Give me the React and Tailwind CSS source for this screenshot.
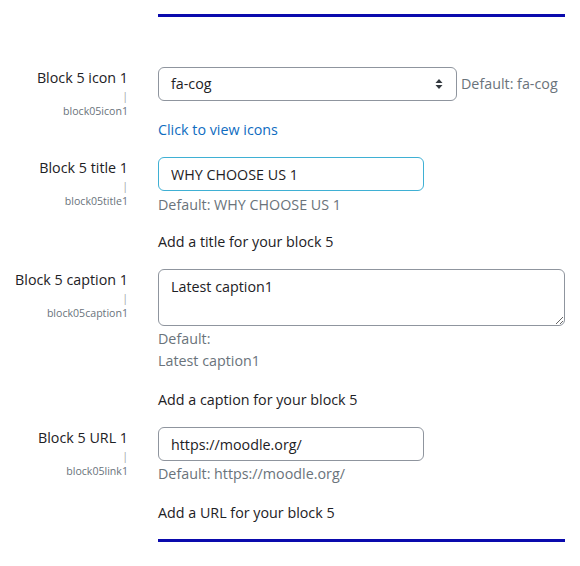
import React from "react";

function Label({ title, name }) {
  return (
    <div className="w-[128px] shrink-0 text-right">
      <div className="text-[14.3px] leading-[22px] text-[#1d2125]">{title}</div>
      <div className="text-[10.6px] leading-[15px] text-[#a0a4a8]">|</div>
      <div className="text-[10.6px] leading-[15px] text-[#6a737b]">{name}</div>
    </div>
  );
}

function Caret() {
  return (
    <svg width="8" height="12" viewBox="0 0 8 12" className="shrink-0">
      <path d="M4 1 L7.5 5 H0.5 Z" fill="#343a40" />
      <path d="M4 11 L7.5 7 H0.5 Z" fill="#343a40" />
    </svg>
  );
}

export default function App() {
  return (
    <div
      className="w-[580px] h-[566px] bg-white pt-[14px] text-[14.3px] text-[#1d2125]"
      style={{ fontFamily: '"Open Sans", "Noto Sans", sans-serif' }}
    >
      <div className="ml-[158px] w-[407px] h-[3px] bg-[#0a0aad]" />

      {/* Icon row */}
      <div className="flex mt-[50px]">
        <Label title="Block 5 icon 1" name="block05icon1" />
        <div className="ml-[30px] flex flex-col">
          <div className="flex items-center">
            <div className="w-[299px] h-[34px] border border-[#8f959e] rounded-[6px] flex items-center justify-between pl-[12px] pr-[13px]">
              <span className="leading-[22px]">fa-cog</span>
              <Caret />
            </div>
            <span className="ml-[4px] leading-[22px] text-[#6a737b]">Default: fa-cog</span>
          </div>
          <div className="mt-[18px] leading-[22px] text-[#0f6cbf]">Click to view icons</div>
        </div>
      </div>

      {/* Title row */}
      <div className="flex mt-[16px]">
        <Label title="Block 5 title 1" name="block05title1" />
        <div className="ml-[30px] flex flex-col">
          <input
            readOnly
            value="WHY CHOOSE US 1"
            className="w-[266px] h-[34px] border border-[#3fb0d4] rounded-[6px] px-[12px] text-[14.3px] text-[#1d2125] outline-none"
            style={{ fontFamily: "inherit" }}
          />
          <div className="mt-[3px] leading-[22px] text-[#6a737b]">Default: WHY CHOOSE US 1</div>
          <div className="mt-[15px] leading-[22px]">Add a title for your block 5</div>
        </div>
      </div>

      {/* Caption row */}
      <div className="flex mt-[16px]">
        <Label title="Block 5 caption 1" name="block05caption1" />
        <div className="ml-[30px] flex flex-col">
          <textarea
            readOnly
            defaultValue="Latest caption1"
            className="block w-[407px] h-[57px] border border-[#8f959e] rounded-[6px] px-[12px] py-[6px] text-[14.3px] leading-[22px] text-[#1d2125] outline-none resize-y"
            style={{ fontFamily: "inherit" }}
          />
          <div className="mt-[2px] leading-[22px] text-[#6a737b]">Default:</div>
          <div className="leading-[22px] text-[#6a737b]">Latest caption1</div>
          <div className="mt-[17px] leading-[22px]">Add a caption for your block 5</div>
        </div>
      </div>

      {/* URL row */}
      <div className="flex mt-[16px]">
        <Label title="Block 5 URL 1" name="block05link1" />
        <div className="ml-[30px] flex flex-col">
          <input
            readOnly
            value="https://moodle.org/"
            className="w-[266px] h-[34px] border border-[#8f959e] rounded-[6px] px-[12px] text-[14.3px] text-[#1d2125] outline-none"
            style={{ fontFamily: "inherit" }}
          />
          <div className="mt-[2px] leading-[22px] text-[#6a737b]">Default: https://moodle.org/</div>
          <div className="mt-[17px] leading-[22px]">Add a URL for your block 5</div>
        </div>
      </div>

      <div className="mt-[15px] ml-[158px] w-[407px] h-[3px] bg-[#0a0aad]" />
    </div>
  );
}
